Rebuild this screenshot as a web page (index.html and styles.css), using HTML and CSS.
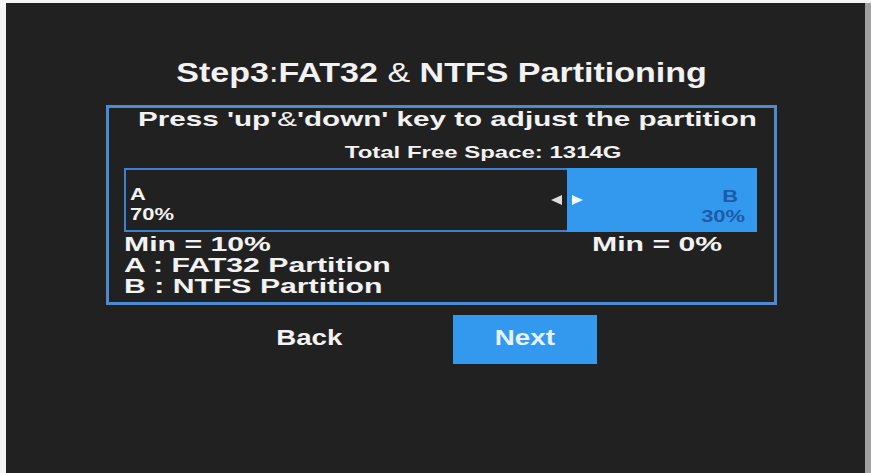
FILE: index.html
```html
<!DOCTYPE html>
<html lang="en">
<head>
    <meta charset="UTF-8">
    <meta name="viewport" content="width=device-width, initial-scale=1.0">
    <title>Step3: FAT32 &amp; NTFS Partitioning</title>
    <link rel="stylesheet" href="styles.css">
</head>
<body>
    <div class="screen">
        <div class="wizard">
            <h1 class="title"><span class="tall">Step3<span class="thin">:</span>FAT32 <span class="thin">&amp;</span> NTFS Partitioning</span></h1>

            <!-- partition panel -->
            <div class="panel">
                <p class="hint"><span class="wide">Press 'up'<span class="thin">&amp;</span>'down' key to adjust the partition</span></p>
                <p class="free"><span class="wide">Total Free Space: 1314G</span></p>

                <div class="bar">
                    <div class="part part-a" style="width: 70%">
                        <div class="label"><span class="wide left">A<br>70%</span></div>
                        <span class="arrow arrow-left"></span>
                    </div>
                    <div class="part part-b" style="width: 30%">
                        <span class="arrow arrow-right"></span>
                        <div class="label label-b"><span class="wide right"><span class="b-name">B</span><br>30%</span></div>
                    </div>
                </div>

                <div class="mins">
                    <span class="wider left">Min = 10%</span>
                    <span class="wider left">Min = 0%</span>
                </div>
                <p class="legend"><span class="wider left">A : FAT32 Partition</span></p>
                <p class="legend"><span class="wider left">B : NTFS Partition</span></p>
            </div>

            <div class="buttons">
                <button class="btn"><span class="tall">Back</span></button>
                <button class="btn active"><span class="tall">Next</span></button>
            </div>
        </div>
    </div>
</body>
</html>
```

FILE: styles.css
```css
body {
    margin: 0;
    padding: 0;
    background-color: #f4f4f4;
    font-family: "Liberation Sans", Arial, sans-serif;
    font-weight: bold;
    color: #f2f2f2;
    overflow: hidden;
}
.screen {
    box-sizing: border-box;
    margin: 3px 0 0 6px;
    width: 865px;
    height: 470px;
    padding: 55px 0 0 100px;
    background-color: #212121;
    border-right: 6px solid #a0a0a0;
}
.wizard {
    width: 671px;
}
.wide,
.wider,
.tall {
    display: inline-block;
    white-space: nowrap;
}
.wide {
    transform: scaleX(1.41);
}
.wider {
    transform: scaleX(1.51);
}
.tall {
    transform: scaleX(1.26);
}
.left {
    transform-origin: left center;
}
.right {
    transform-origin: right center;
}
.thin {
    font-weight: normal;
}
.title {
    margin: 0;
    font-size: 27px;
    line-height: 30px;
    text-align: center;
    font-weight: bold;
}
.panel {
    margin-top: 17px;
    height: 200px;
    box-sizing: border-box;
    border: 3px solid #4c8ad4;
    padding: 0 17px 0 15px;
}
.hint {
    margin: 0;
    padding-left: 14px;
    font-size: 21px;
    line-height: 22px;
    text-align: center;
}
.free {
    margin: 13px 0 0;
    padding-left: 85px;
    font-size: 17px;
    line-height: 20px;
    text-align: center;
}
.bar {
    margin-top: 5px;
    height: 64px;
    display: flex;
}
.part {
    box-sizing: border-box;
    height: 100%;
    display: flex;
    align-items: center;
}
.part-a {
    border: 2px solid #3f80cf;
    border-right: none;
    justify-content: space-between;
}
.part-b {
    background-color: #3399ef;
    justify-content: space-between;
}
.label {
    align-self: flex-end;
    padding: 0 0 5px 4px;
    font-size: 16px;
    line-height: 20px;
}
.label .wide {
    transform: scaleX(1.37);
}
.label-b {
    padding: 0 12px 5px 0;
    text-align: right;
    color: #1d5ba8;
}
.b-name {
    padding-right: 5px;
}
.arrow {
    width: 0;
    height: 0;
    border-top: 5px solid transparent;
    border-bottom: 5px solid transparent;
}
.arrow-left {
    margin-right: 5px;
    border-right: 11px solid #dcdcdc;
}
.arrow-right {
    margin-left: 5px;
    border-left: 11px solid #f4f8ff;
}
.mins {
    margin-top: 1px;
    display: grid;
    grid-template-columns: 468px auto;
    font-size: 20px;
    line-height: 22px;
}
.legend {
    margin: 0;
    font-size: 20px;
    line-height: 21px;
}
.legend:first-of-type {
    margin-top: 4px;
}
.buttons {
    margin-top: 10px;
    padding-left: 131px;
    display: flex;
    gap: 72px;
}
.btn {
    width: 144px;
    height: 49px;
    padding: 0 0 4px;
    border: none;
    background: none;
    color: #f2f2f2;
    font-family: "Liberation Sans", Arial, sans-serif;
    font-weight: bold;
    font-size: 22px;
}
.btn.active {
    background-color: #3399ef;
    color: #e6f2ff;
}
```
